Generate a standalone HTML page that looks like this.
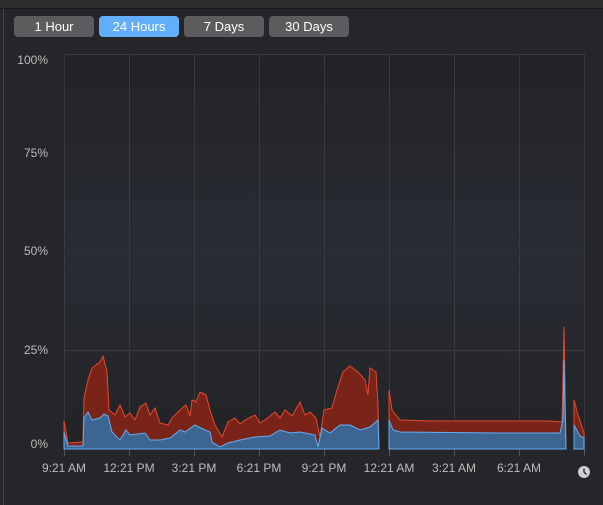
<!DOCTYPE html><html><head><style>
body{margin:0;width:603px;height:505px;background:#26262a;overflow:hidden;font-family:"Liberation Sans",sans-serif;position:relative}
.top{position:absolute;left:0;top:0;width:603px;height:8px;background:#2e2e31;border-bottom:1px solid #1a1a1c}
.lb{position:absolute;left:3px;top:9px;width:1px;height:496px;background:#444}
.btn{position:absolute;top:16px;height:21px;width:80px;border-radius:4px;background:#5c5c5f;color:#fff;font-size:13px;text-align:center;line-height:21px}
.on{background:#62aefb}
.yl{position:absolute;color:#bdbdbd;font-size:12px;right:555px;text-align:right}
.xl{position:absolute;top:461px;color:#bdbdbd;font-size:12px;width:80px;text-align:center}
</style></head><body>
<div class="top"></div><div class="lb"></div>
<div class="btn" style="left:14px">1 Hour</div>
<div class="btn on" style="left:99px">24 Hours</div>
<div class="btn" style="left:184px">7 Days</div>
<div class="btn" style="left:269px">30 Days</div>
<div class="yl" style="top:53px">100%</div>
<div class="yl" style="top:146px">75%</div>
<div class="yl" style="top:244px">50%</div>
<div class="yl" style="top:343px">25%</div>
<div class="yl" style="top:437px">0%</div>
<div class="xl" style="left:24px">9:21 AM</div>
<div class="xl" style="left:89px">12:21 PM</div>
<div class="xl" style="left:154px">3:21 PM</div>
<div class="xl" style="left:219px">6:21 PM</div>
<div class="xl" style="left:284px">9:21 PM</div>
<div class="xl" style="left:349px">12:21 AM</div>
<div class="xl" style="left:414px">3:21 AM</div>
<div class="xl" style="left:479px">6:21 AM</div>
<svg width="603" height="505" style="position:absolute;left:0;top:0">
<defs><linearGradient id="g" x1="0" y1="0" x2="0" y2="1"><stop offset="0" stop-color="#232326"/><stop offset=".5" stop-color="#282c33"/><stop offset="1" stop-color="#232326"/></linearGradient></defs>
<rect x="64" y="54" width="520" height="395" fill="url(#g)"/>
<g stroke="#3a3a3e" stroke-width="1" fill="none">
<path d="M64.5 54V449M129.5 54V449M194.5 54V449M259.5 54V449M324.5 54V449M389.5 54V449M454.5 54V449M519.5 54V449M584.5 54V449"/>
<path d="M64 54.5H584M64 350.5H584"/>
<path d="M64.5 449V456M129.5 449V456M194.5 449V456M259.5 449V456M324.5 449V456M389.5 449V456M454.5 449V456M519.5 449V456M584.5 449V456" stroke="#555"/>
</g>
<path fill="#7a2419" stroke="#e8482c" stroke-width="1" d="M64 449V421L68 443L83 442L84 398L88 380L92 368L100 362L103 356L107 372L109 410L115 415L120 405L125 417L130 413L135 420L140 407L146 403L150 415L155 408L160 423L168 425L172 418L180 410L186 405L190 416L192 400L196 402L200 392L206 395L210 410L215 425L222 437L228 422L235 418L240 424L245 420L255 415L260 423L265 420L275 412L280 418L285 410L292 416L300 402L305 415L310 412L316 418L320 437L324 410L332 408L337 390L343 372L350 366L358 372L365 380L368 395L370 368L376 372L378 405L379 449Z M389 449V390L392 410L400 420L430 421L500 421L550 421L562 422L564 327L566 449Z M574 449V400L578 415L584 433V449Z"/>
<path fill="#3d6591" stroke="#63aef5" stroke-width="1" d="M64 449V432L68 446L83 446L84 418L88 412L92 420L100 418L104 414L108 416L112 432L120 440L126 430L130 435L145 433L150 440L160 440L170 438L180 430L185 432L195 425L205 430L210 432L212 442L220 447L228 443L240 440L255 437L270 436L280 430L290 433L300 432L315 435L318 447L322 428L330 433L340 425L350 425L360 430L370 427L378 420L379 449Z M389 449V420L393 430L400 432L500 433L560 433L563 420L564 360L566 449Z M574 449V425L580 436L584 438V449Z"/>
<circle cx="584" cy="472" r="6" fill="#cfcfcf"/><path d="M584 468.5V472L586.5 474.5" stroke="#26262a" stroke-width="1.3" fill="none"/>
</svg>
</body></html>
